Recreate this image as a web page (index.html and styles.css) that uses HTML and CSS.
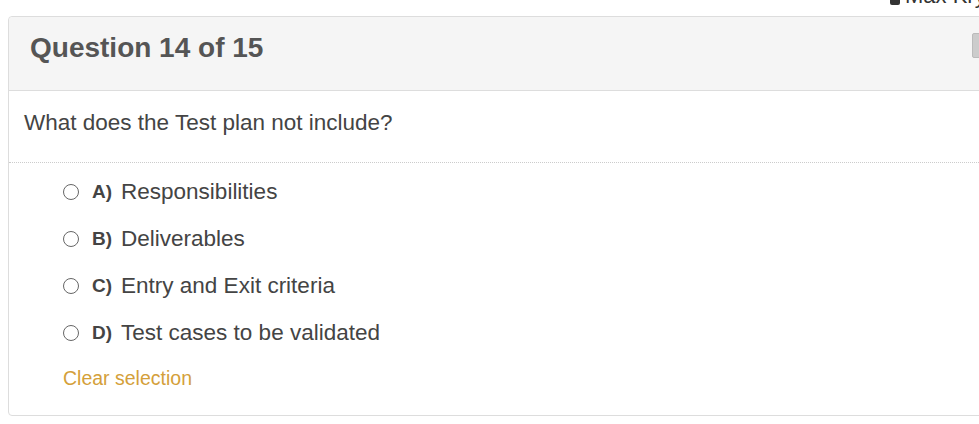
FILE: index.html
```html
<!DOCTYPE html>
<html>
<head>
<meta charset="utf-8">
<link rel="stylesheet" href="styles.css">
</head>
<body>
<div class="topbar">
  <div class="user"><span class="user-icon"></span><span class="user-name">Max Krylov</span></div>
</div>
<div class="card">
  <div class="card-header">
    <h2 class="card-title">Question 14 of 15</h2>
    <span class="header-btn"></span>
  </div>
  <div class="question">What does the Test plan not include?</div>
  <div class="options">
    <label class="option"><span class="radio"></span><strong class="letter">A)</strong><span class="opt-text">Responsibilities</span></label>
    <label class="option"><span class="radio"></span><strong class="letter">B)</strong><span class="opt-text">Deliverables</span></label>
    <label class="option"><span class="radio"></span><strong class="letter">C)</strong><span class="opt-text">Entry and Exit criteria</span></label>
    <label class="option"><span class="radio"></span><strong class="letter">D)</strong><span class="opt-text">Test cases to be validated</span></label>
    <a class="clear">Clear selection</a>
  </div>
</div>
</body>
</html>
```
FILE: styles.css
```css
html, body {
  margin: 0;
  padding: 0;
  background: #fff;
  overflow: hidden;
  font-family: "Liberation Sans", Arial, sans-serif;
}
.topbar {
  height: 16px;
  overflow: hidden;
}
.user {
  display: flex;
  align-items: flex-end;
  margin-left: 890px;
  margin-top: -15px;
  white-space: nowrap;
  height: 22px;
}
.user-icon {
  width: 10px;
  height: 10px;
  background: #333;
  border-radius: 2px;
  margin-bottom: 2px;
  flex: none;
}
.user-name {
  font-size: 22px;
  line-height: 22px;
  color: #333;
  margin-left: 5px;
}
.card {
  margin-left: 8px;
  width: 1010px;
  border: 1px solid #ddd;
  border-radius: 4px;
  background: #fff;
}
.card-header {
  box-sizing: border-box;
  height: 74px;
  background: #f5f5f5;
  border-bottom: 1px solid #ddd;
  border-radius: 4px 4px 0 0;
  display: flex;
  justify-content: space-between;
  align-items: flex-start;
  padding: 15px 15px 0 21px;
}
.card-title {
  margin: 0;
  font-size: 28px;
  line-height: 31px;
  font-weight: bold;
  color: #555;
}
.header-btn {
  width: 32px;
  height: 25px;
  margin-top: 1px;
  background: #ccc;
  border: 1px solid #bbb;
  box-sizing: border-box;
  border-radius: 2px;
}
.question {
  font-size: 22.5px;
  line-height: 26px;
  color: #444;
  padding: 19px 15px 26px 15px;
  border-bottom: 1px dotted #ccc;
}
.options {
  padding: 5px 0 25px 54px;
  display: flex;
  flex-direction: column;
  align-items: flex-start;
}
.option {
  display: flex;
  align-items: center;
  height: 47px;
  color: #444;
}
.radio {
  box-sizing: border-box;
  width: 16px;
  height: 16px;
  border: 1.5px solid #666;
  border-radius: 50%;
  background: #fff;
  margin-right: 13px;
}
.letter {
  font-size: 19px;
  font-weight: bold;
  color: #444;
  margin-right: 9px;
}
.opt-text {
  font-size: 22.5px;
}
.clear {
  margin-top: 10px;
  font-size: 19.5px;
  line-height: 24px;
  color: #d4a03a;
}
```
